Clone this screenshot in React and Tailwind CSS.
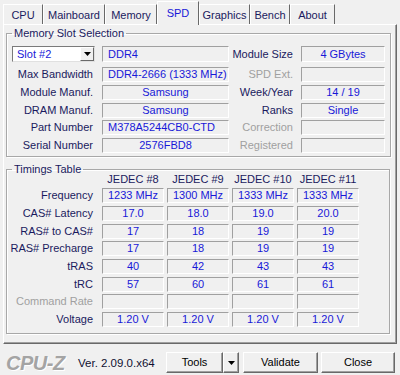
const tabs = [
  { name: "CPU", w: "w-[40px]" },
  { name: "Mainboard", w: "w-[62px]" },
  { name: "Memory", w: "w-[52px]" },
  { name: "SPD", w: "w-[42px]", active: true },
  { name: "Graphics", w: "w-[51px]" },
  { name: "Bench", w: "w-[40px]" },
  { name: "About", w: "w-[45px]" },
];

const slotRows = [
  { label: "Max Bandwidth", value: "DDR4-2666 (1333 MHz)", left: true, label2: "SPD Ext.", off2: true, value2: "" },
  { label: "Module Manuf.", value: "Samsung", label2: "Week/Year", value2: "14 / 19" },
  { label: "DRAM Manuf.", value: "Samsung", label2: "Ranks", value2: "Single" },
  { label: "Part Number", value: "M378A5244CB0-CTD", left: true, label2: "Correction", off2: true, value2: "" },
  { label: "Serial Number", value: "2576FBD8", label2: "Registered", off2: true, value2: "" },
];

const timings = [
  { label: "Frequency", values: ["1233 MHz", "1300 MHz", "1333 MHz", "1333 MHz"] },
  { label: "CAS# Latency", values: ["17.0", "18.0", "19.0", "20.0"] },
  { label: "RAS# to CAS#", values: ["17", "18", "19", "19"] },
  { label: "RAS# Precharge", values: ["17", "18", "19", "19"] },
  { label: "tRAS", values: ["40", "42", "43", "43"] },
  { label: "tRC", values: ["57", "60", "61", "61"] },
  { label: "Command Rate", values: ["", "", "", ""], off: true },
  { label: "Voltage", values: ["1.20 V", "1.20 V", "1.20 V", "1.20 V"] },
];

function Field({ children, left, className = "" }) {
  return (
    <div
      className={`h-[15px] flex items-center bg-[#f0f0f0] border border-t-[#a0a0a0] border-l-[#a0a0a0] border-b-white border-r-white text-[#1818d8] leading-none whitespace-nowrap overflow-hidden ${
        left ? "justify-start pl-[5px]" : "justify-center"
      } ${className}`}
    >
      {children}
    </div>
  );
}

function Label({ children, off, className = "" }) {
  return (
    <div
      className={`text-right leading-none whitespace-nowrap ${
        off ? "text-[#a0a0a0]" : "text-[#1a1a5e]"
      } ${className}`}
    >
      {children}
    </div>
  );
}

function DownArrow() {
  return (
    <svg width="7" height="4" viewBox="0 0 7 4">
      <polygon points="0,0 7,0 3.5,4" fill="#000" />
    </svg>
  );
}

function RaisedButton({ children, className = "" }) {
  return (
    <div
      className={`h-[21px] flex items-center justify-center bg-[#f0f0f0] border border-t-white border-l-white border-b-[#696969] border-r-[#696969] shadow-[inset_-1px_-1px_0_#a0a0a0] text-black ${className}`}
    >
      {children}
    </div>
  );
}

export default function App() {
  return (
    <div className="w-[400px] h-[375px] bg-[#f0f0f0] font-['Liberation_Sans',Arial,sans-serif] text-[11px] overflow-hidden select-none">
      {/* tab strip */}
      <div className="h-[24px] flex items-end pl-[3px]">
        {tabs.map((t) =>
          t.active ? (
            <div
              key={t.name}
              className={`${t.w} h-[24px] -mb-px relative z-10 flex items-center justify-center bg-[#f0f0f0] border-t border-l border-r border-t-white border-l-white border-r-[#696969] text-[#1818d8]`}
            >
              {t.name}
            </div>
          ) : (
            <div
              key={t.name}
              className={`${t.w} h-[20px] flex items-center justify-center border-t border-l border-r border-t-white border-l-white border-r-[#696969] text-[#1a1a5e] pt-[2px]`}
            >
              {t.name}
            </div>
          )
        )}
      </div>

      {/* tab panel */}
      <div className="mx-[3px] h-[320px] border border-t-white border-l-white border-b-[#696969] border-r-[#696969] shadow-[inset_-1px_-1px_0_#a0a0a0] pt-[2px]">
        <fieldset className="ml-[2px] w-[385px] border border-[#a8a8a8] shadow-[inset_1px_1px_0_white,1px_1px_0_white] pb-[3px]">
          <legend className="ml-[5px] px-[2px] text-[#1a1a5e] leading-[13px]">Memory Slot Selection</legend>
          <div className="flex items-center h-[16px] mt-[6px] mb-[5px]">
            <div className="w-[5px]" />
            <div className="w-[83px] h-[16px] flex items-center bg-white border border-t-[#7a7a7a] border-l-[#7a7a7a] border-b-[#e0e0e0] border-r-[#e0e0e0]">
              <span className="flex-1 pl-[4px] text-[#1818d8] leading-none">Slot #2</span>
              <div className="w-[14px] h-[14px] flex items-center justify-center bg-[#f0f0f0] border border-t-white border-l-white border-b-[#696969] border-r-[#696969]">
                <DownArrow />
              </div>
            </div>
            <Field left className="ml-[7px] w-[127px] h-[16px]">DDR4</Field>
            <Label className="w-[64px]">Module Size</Label>
            <Field className="ml-[8px] w-[84px] h-[16px]">4 GBytes</Field>
          </div>
          <div className="flex flex-col gap-[2.8px]">
            {slotRows.map((r) => (
              <div key={r.label} className="flex items-center">
                <Label className="w-[86px]">{r.label}</Label>
                <Field left={r.left} className="ml-[9px] w-[127px]">{r.value}</Field>
                <Label off={r.off2} className="w-[64px]">{r.label2}</Label>
                <Field className="ml-[8px] w-[84px]">{r.value2}</Field>
              </div>
            ))}
          </div>
        </fieldset>

        <fieldset className="mt-[6px] ml-[2px] w-[384px] border border-[#a8a8a8] shadow-[inset_1px_1px_0_white,1px_1px_0_white] pb-[6px]">
          <legend className="ml-[5px] px-[2px] text-[#1a1a5e] leading-[13px]">Timings Table</legend>
          <div className="flex items-center -mt-[3px] h-[12px] mb-[3px]">
            <div className="w-[95px]" />
            <div className="flex gap-[3px]">
              {["JEDEC #8", "JEDEC #9", "JEDEC #10", "JEDEC #11"].map((h) => (
                <div key={h} className="w-[62px] text-center text-[#1a1a5e] leading-none">
                  {h}
                </div>
              ))}
            </div>
          </div>
          <div className="flex flex-col gap-[2.7px]">
            {timings.map((r) => (
              <div key={r.label} className="flex items-center">
                <Label off={r.off} className="w-[86px]">{r.label}</Label>
                <div className="ml-[9px] flex gap-[3px]">
                  {r.values.map((v, i) => (
                    <Field key={i} className="w-[62px]">{v}</Field>
                  ))}
                </div>
              </div>
            ))}
          </div>
        </fieldset>
      </div>

      {/* bottom bar */}
      <div className="h-[31px] flex items-center pt-[6px]">
        <div className="ml-[6px] w-[64px] text-[20px] font-bold italic text-[#a4a4a4] [text-shadow:1px_1px_0_#ffffff] leading-none tracking-[-0.5px]">
          CPU-Z
        </div>
        <div className="ml-[8px] w-[88px] text-[#101030] text-[11.5px] leading-none pt-[3px]">Ver. 2.09.0.x64</div>
        <RaisedButton className="w-[57px]">Tools</RaisedButton>
        <RaisedButton className="w-[16px]">
          <DownArrow />
        </RaisedButton>
        <RaisedButton className="ml-[4px] w-[75px]">Validate</RaisedButton>
        <RaisedButton className="ml-[3px] w-[74px]">Close</RaisedButton>
      </div>
    </div>
  );
}
